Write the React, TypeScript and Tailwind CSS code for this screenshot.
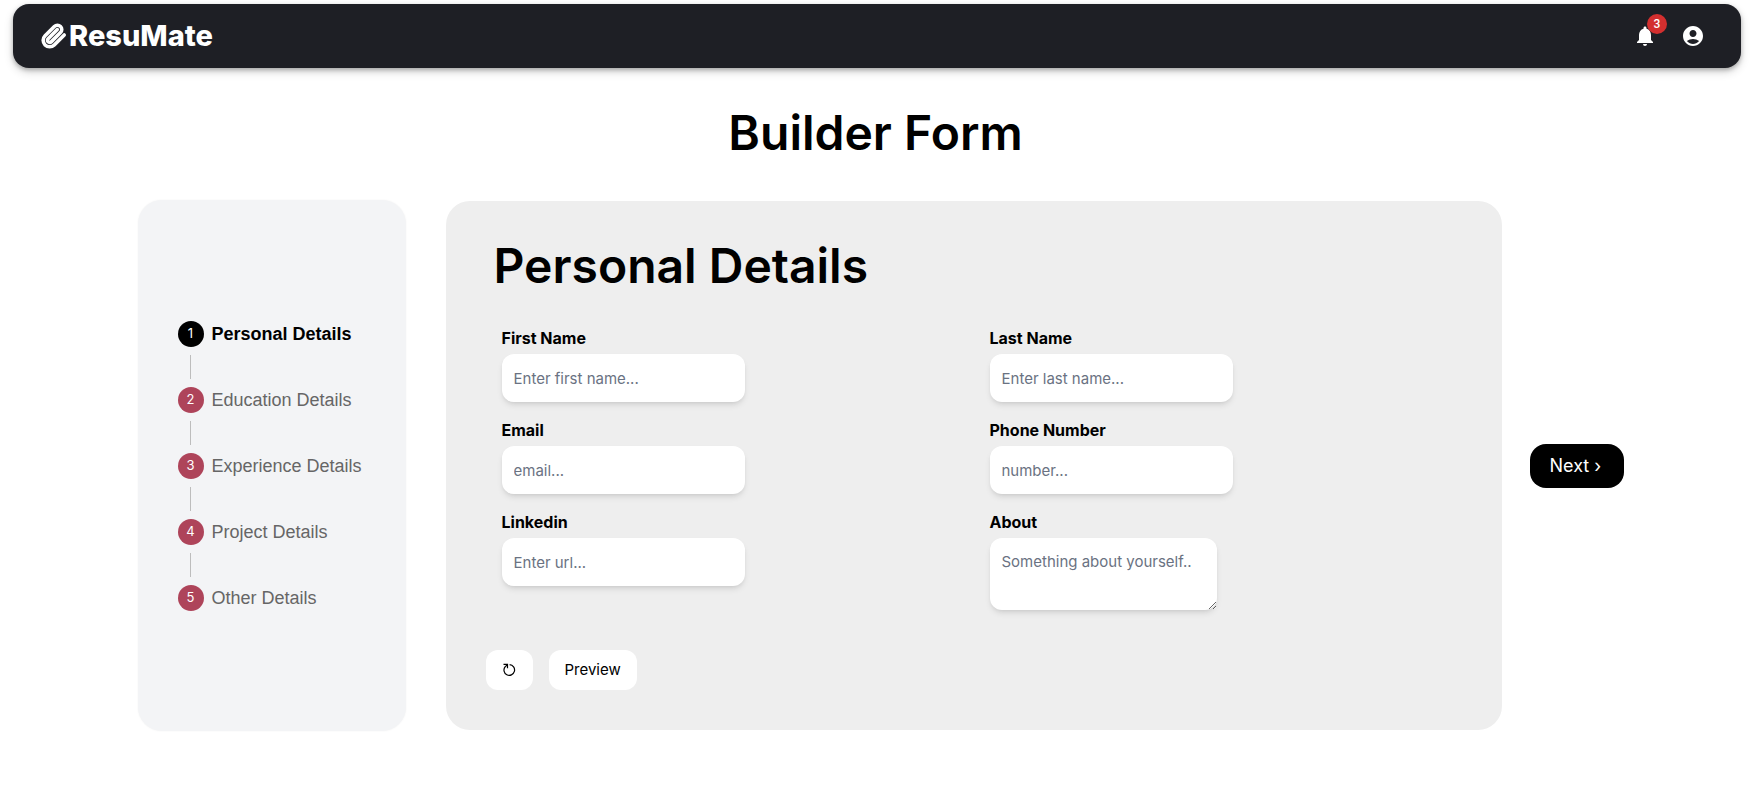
import { MdNotifications, MdAccountCircle } from "react-icons/md";

const steps = ["Personal Details", "Education Details", "Experience Details", "Project Details", "Other Details"];

const fields = [
  { id: "firstName", label: "First Name", placeholder: "Enter first name...", type: "text" },
  { id: "lastName", label: "Last Name", placeholder: "Enter last name...", type: "text" },
  { id: "email", label: "Email", placeholder: "email...", type: "email" },
  { id: "phone", label: "Phone Number", placeholder: "number...", type: "tel" },
  { id: "linkedin", label: "Linkedin", placeholder: "Enter url...", type: "url" },
];

function ClipLogo() {
  return (
    <svg viewBox="0 0 24 24" className="size-[26px] overflow-visible" fill="none" strokeLinecap="round" strokeLinejoin="round" aria-hidden="true">
      <path
        d="M21.44 11.05l-9.19 9.19a6 6 0 0 1-8.49-8.49l8.57-8.57A4 4 0 1 1 18 8.84l-8.59 8.57a2 2 0 0 1-2.83-2.83l8.49-8.48"
        stroke="white"
        strokeWidth="3.3"
      />
    </svg>
  );
}

function Header() {
  return (
    <header className="mt-1 mr-[22px] ml-[13px] flex h-16 items-center justify-between rounded-2xl bg-[#1e1f25] pr-9 pl-7 text-white shadow-[0_2px_4px_rgba(0,0,0,0.25),0_4px_10px_rgba(0,0,0,0.16)]">
      <a href="#" className="flex items-center gap-0.5 text-[29px] leading-8 font-extrabold">
        <ClipLogo />
        ResuMate
      </a>
      <nav className="flex items-center gap-6">
        <button aria-label="Notifications" className="relative">
          <MdNotifications className="size-6" />
          <span className="absolute -top-2.5 left-3.5 flex size-5 items-center justify-center rounded-full bg-[#d32f2f] font-['Roboto',sans-serif] text-xs font-medium">
            3
          </span>
        </button>
        <button aria-label="Account">
          <MdAccountCircle className="size-6" />
        </button>
      </nav>
    </header>
  );
}

function Stepper() {
  return (
    <aside className="flex w-[268px] shrink-0 flex-col justify-center rounded-3xl bg-gray-100 px-10 shadow-[0_0_2px_rgba(0,0,0,0.06)]">
      <ol className="flex flex-col gap-2 font-['Liberation_Sans',Arial,sans-serif] text-lg">
        {steps.map((step, i) => (
          <li key={step} className="flex flex-col gap-2">
            {i > 0 && <span className="ml-3 h-6 w-px bg-[#bdbdbd]" />}
            <span className="flex h-[26px] items-center gap-2">
              <span
                className={
                  i === 0
                    ? "flex size-[26px] shrink-0 items-center justify-center rounded-full bg-black font-['Inter',sans-serif] text-[13px] text-white"
                    : "flex size-[26px] shrink-0 items-center justify-center rounded-full bg-[#ae445a] font-['Inter',sans-serif] text-[13px] text-white"
                }
              >
                {i + 1}
              </span>
              <span className={i === 0 ? "font-bold whitespace-nowrap text-black" : "whitespace-nowrap text-[#666666]"}>{step}</span>
            </span>
          </li>
        ))}
      </ol>
    </aside>
  );
}

function DetailsForm() {
  return (
    <form className="my-px ml-10 max-w-[1056px] grow rounded-3xl bg-[#eeeeee] p-10">
      <h2 className="pl-2 text-5xl leading-[49px] font-semibold">Personal Details</h2>
      <div className="mt-5 grid grid-cols-2">
        {fields.map((f) => (
          <div key={f.id} className="flex flex-col items-start gap-1 px-4 pt-4">
            <label htmlFor={f.id} className="leading-6 font-bold">
              {f.label}
            </label>
            <input
              id={f.id}
              type={f.type}
              placeholder={f.placeholder}
              className="h-12 w-[243px] rounded-xl bg-white px-3 text-[15px] shadow-md placeholder:text-gray-500"
            />
          </div>
        ))}
        <div className="flex flex-col items-start gap-1 px-4 pt-4">
          <label htmlFor="about" className="leading-6 font-bold">
            About
          </label>
          <textarea
            id="about"
            placeholder="Something about yourself.."
            className="h-[72px] w-[227px] rounded-xl bg-white p-3 text-[15px] leading-6 shadow-md placeholder:text-gray-500"
          />
        </div>
      </div>
      <div className="mt-10 flex gap-4">
        <button type="reset" aria-label="Reset" className="flex h-10 w-[47px] items-center justify-center rounded-xl bg-white">
          <svg viewBox="0 0 14 14" className="size-3.5" fill="none" stroke="black" strokeWidth="1.2" aria-hidden="true">
            <path d="M7.6 1.7A5.3 5.3 0 1 1 3.2 3.6" />
            <path d="M1.5 1.3h4v4M5.5 1.3 3.2 3.8" />
          </svg>
        </button>
        <button type="button" className="h-10 rounded-xl bg-white px-4 text-[15px]">
          Preview
        </button>
      </div>
    </form>
  );
}

export default function App() {
  return (
    <div className="flow-root min-h-screen bg-white font-['Inter',sans-serif] text-base text-black">
      <Header />
      <h1 className="mt-10 mr-3 text-center text-5xl leading-[50px] font-semibold">Builder Form</h1>
      <main className="mt-[42px] mr-0.5 flex justify-center">
        <Stepper />
        <DetailsForm />
        <button className="ml-7 h-11 w-[94px] shrink-0 self-center rounded-2xl bg-black pl-5 text-left text-lg text-white">
          Next ›
        </button>
      </main>
    </div>
  );
}
